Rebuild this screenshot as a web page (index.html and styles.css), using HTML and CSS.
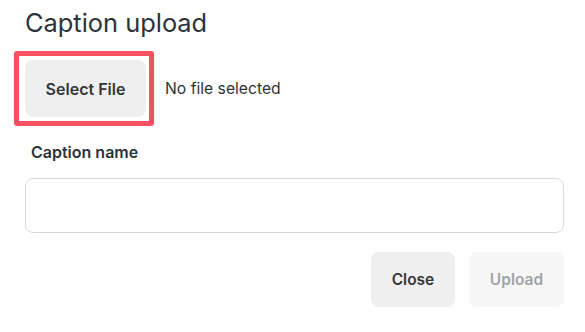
FILE: index.html
```html
<!DOCTYPE html>
<html>
<head>
<meta charset="utf-8">
<link rel="stylesheet" href="styles.css">
</head>
<body>
<div class="dialog">
  <h1 class="title">Caption upload</h1>
  <div class="file-row">
    <div class="highlight">
      <button class="btn btn-select">Select File</button>
    </div>
    <span class="file-status">No file selected</span>
  </div>
  <label class="field-label">Caption name</label>
  <div class="text-input"></div>
  <div class="actions">
    <button class="btn btn-close">Close</button>
    <button class="btn btn-upload">Upload</button>
  </div>
</div>
</body>
</html>
```
FILE: styles.css
```css
html, body {
  margin: 0;
  padding: 0;
  background: #ffffff;
}
body {
  font-family: Inter, "Noto Sans", "Liberation Sans", sans-serif;
  color: #2c3338;
}
.dialog {
  width: 585px;
  height: 332px;
  box-sizing: border-box;
  padding: 7px 21px 0 25px;
  display: flex;
  flex-direction: column;
}
.title {
  margin: 0;
  font-size: 25.4px;
  line-height: 32px;
  font-weight: 400;
  color: #2c3338;
}
.file-row {
  display: flex;
  align-items: center;
  margin-top: 12px;
  margin-left: -11px;
}
.highlight {
  border: 5px solid #fb4f62;
  border-radius: 3px;
  padding: 4px 3px 4px 6px;
  display: flex;
}
.btn {
  font-family: inherit;
  border: none;
  border-radius: 8px;
  font-size: 16px;
  font-weight: 600;
  padding: 0;
  height: 57px;
}
.btn-select {
  width: 121px;
  background: #efefef;
  color: #333638;
}
.file-status {
  margin-left: 11px;
  font-size: 15.7px;
  color: #2c3338;
}
.field-label {
  margin-top: 16px;
  margin-left: 6px;
  font-size: 16px;
  font-weight: 600;
  line-height: 20px;
  color: #2c3338;
}
.text-input {
  margin-top: 16px;
  height: 55px;
  box-sizing: border-box;
  border: 1px solid #d9d9d9;
  border-radius: 8px;
}
.actions {
  display: flex;
  justify-content: flex-end;
  gap: 14px;
  margin-top: 19px;
}
.btn-close {
  width: 84px;
  height: 55px;
  font-size: 15.5px;
  background: #efefef;
  color: #333638;
}
.btn-upload {
  width: 95px;
  height: 55px;
  font-size: 15.5px;
  background: #f7f7f7;
  color: #a0a3a6;
}
```
